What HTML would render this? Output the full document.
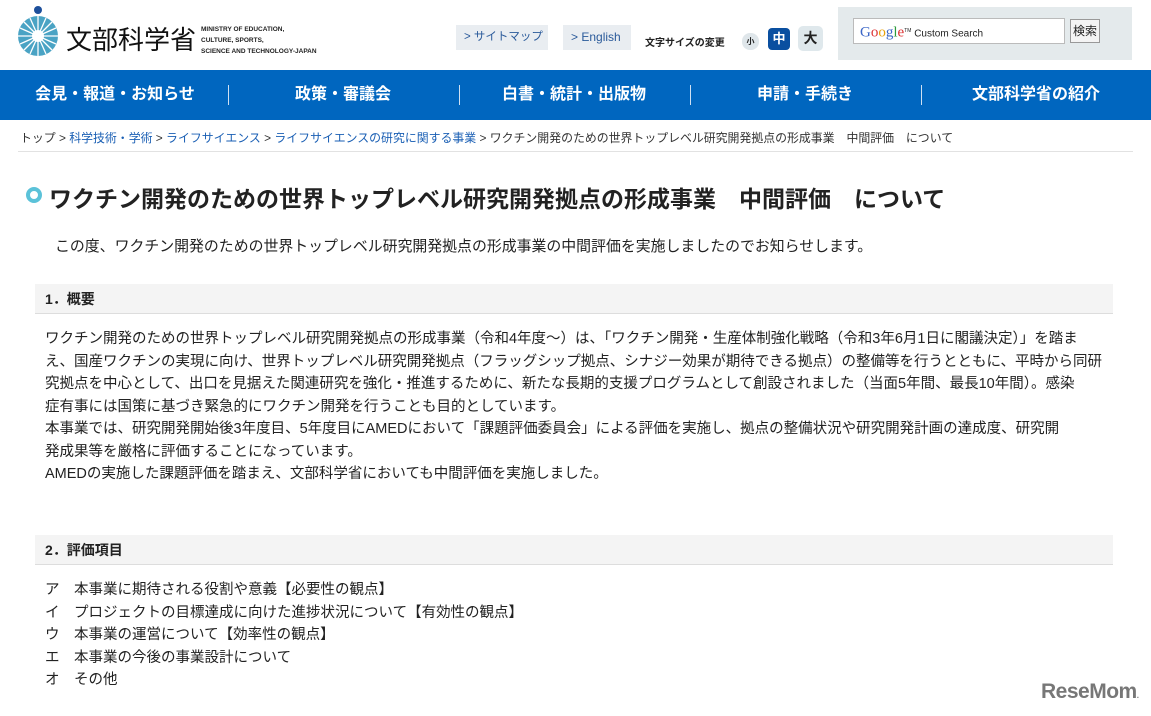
<!DOCTYPE html>
<html><head><meta charset="utf-8"><style>
*{margin:0;padding:0;box-sizing:border-box}
body{width:1151px;height:716px;overflow:hidden;background:#fff;font-family:"Liberation Sans","Noto Sans CJK JP",sans-serif;color:#222;position:relative}
.a{position:absolute;white-space:nowrap}
.btn{position:absolute;background:#e9edf1;height:25px;top:25px;font-size:12px;color:#2a5a9a;line-height:25px;padding-left:8px;white-space:nowrap;overflow:hidden}
.nav{position:absolute;top:70px;left:0;width:1151px;height:50px;background:#0066bf}
.nav span{position:absolute;top:0;line-height:50px;color:#fff;font-size:16px;font-weight:bold;width:230px;text-align:center}
.sep{position:absolute;top:15px;width:1px;height:20px;background:#cfe0f2}
.bc{top:129px;left:20px;font-size:11.9px;color:#333}
.bc a{color:#1a5fb4;text-decoration:none}
.sh{position:absolute;left:35px;width:1078px;height:30px;background:#f4f4f4;border-bottom:1px solid #ddd;font-size:14px;font-weight:bold;line-height:30px;padding-left:10px}
.p{left:45px;font-size:14.5px;line-height:22.5px;color:#222}
</style></head><body>
<svg class="a" style="left:15px;top:4px" width="46" height="54" viewBox="0 0 46 54">
<circle cx="23" cy="6" r="4" fill="#1d4f9b"/>
<circle cx="23" cy="32" r="20" fill="#4aa3c4"/>
<circle cx="23" cy="32" r="6" fill="#fff"/>
<g stroke="#fff" stroke-width="1.3">
<line x1="23" y1="12" x2="23" y2="52"/><line x1="3" y1="32" x2="43" y2="32"/>
<line x1="9" y1="18" x2="37" y2="46"/><line x1="37" y1="18" x2="9" y2="46"/>
<line x1="15" y1="14" x2="31" y2="50"/><line x1="31" y1="14" x2="15" y2="50"/>
<line x1="5" y1="24" x2="41" y2="40"/><line x1="41" y1="24" x2="5" y2="40"/>
</g></svg>
<div class="a" style="left:66px;top:20px;font-size:26px;color:#111;letter-spacing:0">文部科学省</div>
<div class="a" style="left:201px;top:24px;font-size:6.5px;line-height:11px;color:#222;font-weight:bold">MINISTRY OF EDUCATION,<br>CULTURE, SPORTS,<br>SCIENCE AND TECHNOLOGY-JAPAN</div>
<div class="btn" style="left:456px;width:92px;font-size:11.5px">&gt; サイトマップ</div>
<div class="btn" style="left:563px;width:68px">&gt; English</div>
<div class="a" style="left:645px;top:34px;font-size:10px;font-weight:bold">文字サイズの変更</div>
<div class="a" style="left:742px;top:33px;width:17px;height:17px;border-radius:8px;background:#dfe6ea;font-size:8px;text-align:center;line-height:17px;font-weight:bold">小</div>
<div class="a" style="left:768px;top:28px;width:22px;height:22px;border-radius:4px;background:#0a4fa0;color:#fff;font-size:13px;text-align:center;line-height:22px;font-weight:bold">中</div>
<div class="a" style="left:798px;top:26px;width:25px;height:25px;border-radius:5px;background:#dfe8ec;font-size:14px;text-align:center;line-height:25px;font-weight:bold">大</div>
<div class="a" style="left:838px;top:7px;width:294px;height:53px;background:#e4eaec"></div>
<div class="a" style="left:853px;top:18px;width:212px;height:26px;background:#fff;border:1px solid #bbb;font-size:10px;line-height:24px;padding-left:6px"><span style="font-family:'Liberation Serif',serif;font-size:15px;color:#3b66c7">G<span style="color:#d33">o</span><span style="color:#e9a00c">o</span>g<span style="color:#2a9a3a">l</span><span style="color:#d33">e</span></span><sup style="font-size:5px">TM</sup> Custom Search</div>
<div class="a" style="left:1070px;top:19px;width:30px;height:24px;background:#f4f4f4;border:1px solid #999;font-size:12px;text-align:center;line-height:22px">検索</div>
<div class="nav">
<span style="left:0">会見・報道・お知らせ</span><div class="sep" style="left:228px"></div>
<span style="left:228px">政策・審議会</span><div class="sep" style="left:459px"></div>
<span style="left:459px">白書・統計・出版物</span><div class="sep" style="left:690px"></div>
<span style="left:690px">申請・手続き</span><div class="sep" style="left:921px"></div>
<span style="left:921px">文部科学省の紹介</span>
</div>
<div class="a bc">トップ &gt; <a>科学技術・学術</a> &gt; <a>ライフサイエンス</a> &gt; <a>ライフサイエンスの研究に関する事業</a> &gt; ワクチン開発のための世界トップレベル研究開発拠点の形成事業　中間評価　について</div>
<div class="a" style="left:18px;top:151px;width:1115px;height:1px;background:#e2e2e2"></div>
<div class="a" style="left:26px;top:187px;width:16px;height:16px;border-radius:50%;border:4px solid #5bc2d9;background:#fff"></div>
<div class="a" style="left:49px;top:180px;font-size:23px;font-weight:bold;color:#222">ワクチン開発のための世界トップレベル研究開発拠点の形成事業　中間評価　について</div>
<div class="a" style="left:55px;top:235px;font-size:14.9px">この度、ワクチン開発のための世界トップレベル研究開発拠点の形成事業の中間評価を実施しましたのでお知らせします。</div>
<div class="sh" style="top:284px">1．概要</div>
<div class="a p" style="top:328px">ワクチン開発のための世界トップレベル研究開発拠点の形成事業（令和4年度～）は、「ワクチン開発・生産体制強化戦略（令和3年6月1日に閣議決定）」を踏ま<br>え、国産ワクチンの実現に向け、世界トップレベル研究開発拠点（フラッグシップ拠点、シナジー効果が期待できる拠点）の整備等を行うとともに、平時から同研<br>究拠点を中心として、出口を見据えた関連研究を強化・推進するために、新たな長期的支援プログラムとして創設されました（当面5年間、最長10年間）。感染<br>症有事には国策に基づき緊急的にワクチン開発を行うことも目的としています。<br>本事業では、研究開発開始後3年度目、5年度目にAMEDにおいて「課題評価委員会」による評価を実施し、拠点の整備状況や研究開発計画の達成度、研究開<br>発成果等を厳格に評価することになっています。<br>AMEDの実施した課題評価を踏まえ、文部科学省においても中間評価を実施しました。</div>
<div class="sh" style="top:535px">2．評価項目</div>
<div class="a p" style="top:579px">ア　本事業に期待される役割や意義【必要性の観点】<br>イ　プロジェクトの目標達成に向けた進捗状況について【有効性の観点】<br>ウ　本事業の運営について【効率性の観点】<br>エ　本事業の今後の事業設計について<br>オ　その他</div>
<div class="a" style="left:1041px;top:680px;font-size:21px;font-weight:bold;color:#777;letter-spacing:-0.5px">ReseMom<span style="font-size:8px">.</span></div>
</body></html>
